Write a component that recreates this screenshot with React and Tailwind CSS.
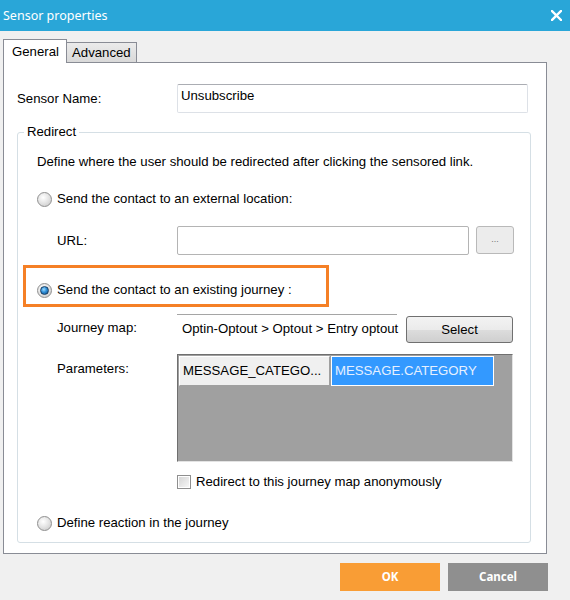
import React from 'react';

function Radio({ checked }) {
  return (
    <span className="w-[15px] h-[15px] rounded-full border border-[#8f8f8f] bg-[radial-gradient(circle_at_40%_35%,#ffffff_0%,#e6e6e6_45%,#c4c4c4_100%)] flex items-center justify-center shrink-0">
      {checked && (
        <span className="w-[9px] h-[9px] rounded-full border border-[#1b3f63] bg-[radial-gradient(circle_at_40%_35%,#9fdcff_0%,#2f8fd8_45%,#0f4c85_100%)]" />
      )}
    </span>
  );
}

function Checkbox() {
  return (
    <span className="w-[14px] h-[14px] border border-[#8f8f8f] bg-white p-[1px] shrink-0">
      <span className="block w-full h-full bg-gradient-to-br from-[#d6d6d6] to-[#f7f7f7]" />
    </span>
  );
}

export default function App() {
  return (
    <div className="w-[570px] h-[600px] bg-[#f0f0f0] flex flex-col font-['Liberation_Sans',Arial,sans-serif] text-[13.2px] text-black leading-4">
      {/* title bar */}
      <div className="h-[31px] bg-[#29a6d8] flex items-center justify-between pl-[3px] pr-[8px] shrink-0">
        <span className="font-['Noto_Sans',sans-serif] text-[12.5px] text-white pt-[1px]">Sensor properties</span>
        <svg width="11" height="11" viewBox="0 0 11 11">
          <path d="M1 1 L10 10 M10 1 L1 10" stroke="white" strokeWidth="2.4" strokeLinecap="square" />
        </svg>
      </div>

      {/* tabs */}
      <div className="mt-[8px] h-[23px] flex items-end pl-[3px]">
        <div className="relative z-10 w-[64px] h-[24px] -mb-px bg-white border border-b-0 border-[#898c95] pl-[8px] pt-[4px]">General</div>
        <div className="w-[70px] h-[20px] border border-b-0 border-l-0 border-[#898c95] bg-gradient-to-b from-[#ebebeb] to-[#d9d9d9] pl-[5px] pt-[2px]">Advanced</div>
      </div>

      {/* panel */}
      <div className="ml-[3px] w-[544px] h-[492px] bg-white border border-[#898c95] pt-[21px] px-[13px] shrink-0">
        <div className="flex items-center h-[29px]">
          <span className="w-[160px]">Sensor Name:</span>
          <div className="w-[351px] h-[29px] border border-[#dde1e7] border-t-[#abadb3] rounded-[2px] pl-[3px] pt-[3px]">Unsubscribe</div>
        </div>

        <fieldset className="mt-[11px] w-[514px] border border-[#d5dfe5] rounded-[3px] px-[5px] pb-[11px]">
          <legend className="ml-[1px] px-[3px] leading-4">Redirect</legend>

          <div className="mt-[14px] pl-[14px]">Define where the user should be redirected after clicking the sensored link.</div>

          <div className="mt-[21px] pl-[14px] flex items-center gap-[5px] h-[16px]">
            <Radio />
            <span>Send the contact to an external location:</span>
          </div>

          <div className="mt-[19px] pl-[34px] flex items-center h-[29px]">
            <span className="w-[120px]">URL:</span>
            <div className="w-[292px] h-[29px] border border-[#b4b4b4] rounded-[2px]" />
            <div className="ml-[7px] w-[38px] h-[28px] -mt-[2px] border border-[#b9b9b9] rounded-[3px] bg-[#ececec] flex items-end justify-center pb-[6px] text-[9px] text-[#777]">...</div>
          </div>

          <div className="mt-[10px] w-[306px] h-[42px] border-[3px] border-[#f58026] pl-[11px] pt-[14px]">
            <div className="flex items-center gap-[5px] h-[16px]">
              <Radio checked />
              <span>Send the contact to an existing journey :</span>
            </div>
          </div>

          <div className="mt-[7px] pl-[34px] flex h-[28px]">
            <span className="w-[120px] self-center">Journey map:</span>
            <div className="w-[220px] h-[28px] border-t border-[#a5a5a5] pl-[5px] flex items-center whitespace-nowrap">Optin-Optout &gt; Optout &gt; Entry optout</div>
            <div className="ml-[9px] mt-[2px] w-[107px] h-[27px] rounded-[3px] border border-[#707070] bg-[linear-gradient(#f3f3f3_0%,#ebebeb_50%,#dddddd_50%,#cfcfcf_100%)] flex items-center justify-center">Select</div>
          </div>

          <div className="mt-[12px] pl-[34px] flex">
            <span className="w-[120px] pt-[7px]">Parameters:</span>
            <div className="w-[336px] h-[108px] bg-[#a0a0a0] border border-[#e3e3e3] border-t-[#6f6f6f] border-l-[#6f6f6f] pl-px pt-px">
              <div className="flex h-[30px]">
                <div className="w-[151px] h-full bg-[#f0f0f0] border border-white border-r-[#a0a0a0] border-b-[#a0a0a0] pl-[3px] flex items-center whitespace-nowrap">MESSAGE_CATEGO...</div>
                <div className="ml-px w-[163px] h-full bg-[#3399ff] border border-white pl-[3px] flex items-center text-[#e6f0ff] whitespace-nowrap">MESSAGE.CATEGORY</div>
              </div>
            </div>
          </div>

          <div className="mt-[12px] pl-[154px] flex items-center gap-[5px] h-[16px]">
            <Checkbox />
            <span>Redirect to this journey map anonymously</span>
          </div>

          <div className="mt-[25px] pl-[14px] flex items-center gap-[5px] h-[16px]">
            <Radio />
            <span>Define reaction in the journey</span>
          </div>
        </fieldset>
      </div>

      {/* buttons */}
      <div className="mt-[9px] flex justify-end gap-[8px] pr-[22px]">
        <button className="w-[100px] h-[28px] bg-[#f99d35] text-white font-bold font-['Noto_Sans',sans-serif] text-[11.5px]">OK</button>
        <button className="w-[100px] h-[28px] bg-[#8f8f8f] text-white font-bold font-['Noto_Sans',sans-serif] text-[11.5px]">Cancel</button>
      </div>
    </div>
  );
}
